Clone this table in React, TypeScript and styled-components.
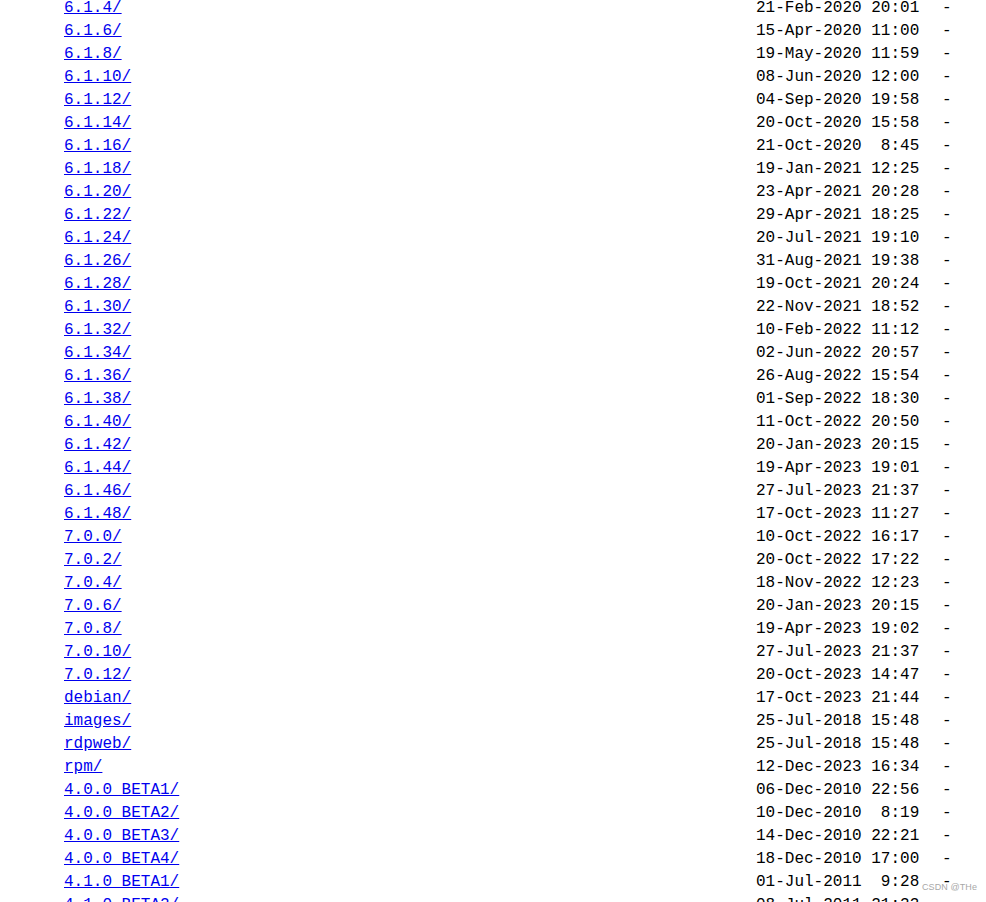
import React from "react";
import styled, { createGlobalStyle } from "styled-components";

const GlobalStyle = createGlobalStyle`
  html, body {
    margin: 0;
    padding: 0;
    background: #fff;
    overflow: hidden;
  }
`;

const Listing = styled.div`
  position: relative;
  height: 902px;
  overflow: hidden;
  padding-left: 64px;
  font-family: "Liberation Mono", "DejaVu Sans Mono", monospace;
  font-size: 16px;
  line-height: 23px;
  color: #000;
`;

const Rows = styled.div`
  margin-top: -3px;
  display: flex;
  flex-direction: column;
`;

const Row = styled.div`
  display: grid;
  grid-template-columns: 692px 186px auto;
  height: 23px;
  white-space: pre;
`;

const NameLink = styled.a`
  color: #0000ee;
  text-decoration: underline;
  justify-self: start;
`;

const Stamp = styled.span`
  color: #000;
`;

const Size = styled.span`
  color: #000;
`;

const Watermark = styled.div`
  position: absolute;
  left: 922px;
  top: 882px;
  font-family: "Liberation Sans", Arial, sans-serif;
  font-size: 9px;
  line-height: 10px;
  color: #a8a8a8;
  letter-spacing: 0.1px;
`;

const entries: [string, string][] = [
  ["6.1.4/", "21-Feb-2020 20:01"],
  ["6.1.6/", "15-Apr-2020 11:00"],
  ["6.1.8/", "19-May-2020 11:59"],
  ["6.1.10/", "08-Jun-2020 12:00"],
  ["6.1.12/", "04-Sep-2020 19:58"],
  ["6.1.14/", "20-Oct-2020 15:58"],
  ["6.1.16/", "21-Oct-2020  8:45"],
  ["6.1.18/", "19-Jan-2021 12:25"],
  ["6.1.20/", "23-Apr-2021 20:28"],
  ["6.1.22/", "29-Apr-2021 18:25"],
  ["6.1.24/", "20-Jul-2021 19:10"],
  ["6.1.26/", "31-Aug-2021 19:38"],
  ["6.1.28/", "19-Oct-2021 20:24"],
  ["6.1.30/", "22-Nov-2021 18:52"],
  ["6.1.32/", "10-Feb-2022 11:12"],
  ["6.1.34/", "02-Jun-2022 20:57"],
  ["6.1.36/", "26-Aug-2022 15:54"],
  ["6.1.38/", "01-Sep-2022 18:30"],
  ["6.1.40/", "11-Oct-2022 20:50"],
  ["6.1.42/", "20-Jan-2023 20:15"],
  ["6.1.44/", "19-Apr-2023 19:01"],
  ["6.1.46/", "27-Jul-2023 21:37"],
  ["6.1.48/", "17-Oct-2023 11:27"],
  ["7.0.0/", "10-Oct-2022 16:17"],
  ["7.0.2/", "20-Oct-2022 17:22"],
  ["7.0.4/", "18-Nov-2022 12:23"],
  ["7.0.6/", "20-Jan-2023 20:15"],
  ["7.0.8/", "19-Apr-2023 19:02"],
  ["7.0.10/", "27-Jul-2023 21:37"],
  ["7.0.12/", "20-Oct-2023 14:47"],
  ["debian/", "17-Oct-2023 21:44"],
  ["images/", "25-Jul-2018 15:48"],
  ["rdpweb/", "25-Jul-2018 15:48"],
  ["rpm/", "12-Dec-2023 16:34"],
  ["4.0.0_BETA1/", "06-Dec-2010 22:56"],
  ["4.0.0_BETA2/", "10-Dec-2010  8:19"],
  ["4.0.0_BETA3/", "14-Dec-2010 22:21"],
  ["4.0.0_BETA4/", "18-Dec-2010 17:00"],
  ["4.1.0_BETA1/", "01-Jul-2011  9:28"],
  ["4.1.0_BETA2/", "08-Jul-2011 21:33"],
];

const App: React.FC = () => {
  return (
    <>
      <GlobalStyle />
      <Listing>
        <Rows>
          {entries.map(([name, date]) => (
            <Row key={name}>
              <NameLink href={"#" + name}>{name}</NameLink>
              <Stamp>{date}</Stamp>
              <Size>-</Size>
            </Row>
          ))}
        </Rows>
        <Watermark>CSDN @THe</Watermark>
      </Listing>
    </>
  );
};

export default App;
